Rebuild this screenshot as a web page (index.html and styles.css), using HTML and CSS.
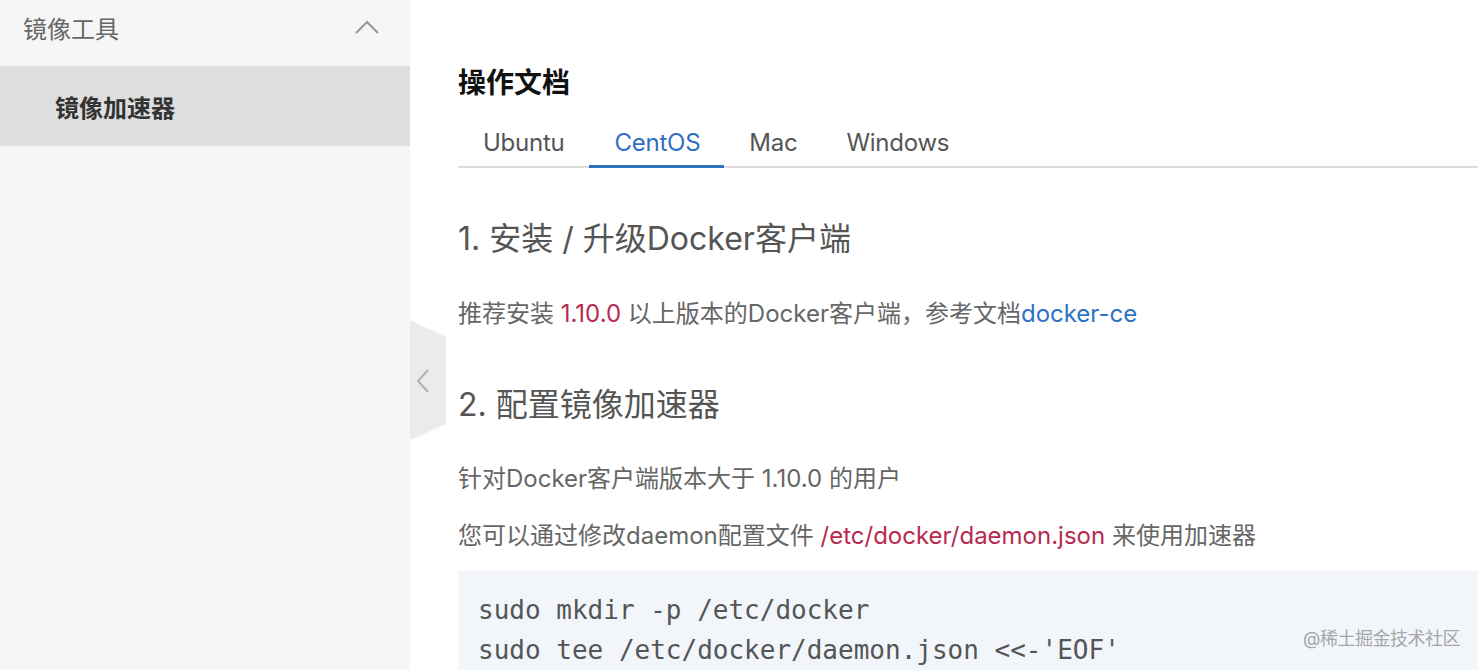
FILE: index.html
```html
<!DOCTYPE html>
<html lang="zh-CN">
<head>
<meta charset="utf-8">
<title>镜像加速器</title>
<link rel="stylesheet" href="styles.css">
</head>
<body>
<div class="page">
  <aside class="sidebar">
    <div class="side-header">
      <span>镜像工具</span>
      <svg class="chev-up" width="26" height="16" viewBox="0 0 26 16"><path d="M2 14 L13 3 L24 14" fill="none" stroke="#9a9a9a" stroke-width="2.2"/></svg>
    </div>
    <div class="side-item active">镜像加速器</div>
  </aside>
  <main class="main">
    <div class="collapse">
      <svg width="16" height="26" viewBox="0 0 16 26"><path d="M13 2 L3 13 L13 24" fill="none" stroke="#b0b0b0" stroke-width="2"/></svg>
    </div>
    <h1 class="title">操作文档</h1>
    <nav class="tabs">
      <span class="tab">Ubuntu</span>
      <span class="tab active">CentOS</span>
      <span class="tab">Mac</span>
      <span class="tab">Windows</span>
    </nav>
    <h2 class="sec sec1">1. 安装 / 升级Docker客户端</h2>
    <p class="para p1">推荐安装 <span class="red">1.10.0</span> 以上版本的Docker客户端，参考文档<a class="link">docker-ce</a></p>
    <h2 class="sec sec2">2. 配置镜像加速器</h2>
    <p class="para p2">针对Docker客户端版本大于 1.10.0 的用户</p>
    <p class="para p3">您可以通过修改daemon配置文件 <span class="red">/etc/docker/daemon.json</span> 来使用加速器</p>
    <pre class="code">sudo mkdir -p /etc/docker
sudo tee /etc/docker/daemon.json &lt;&lt;-'EOF'</pre>
  </main>
  <div class="watermark">@稀土掘金技术社区</div>
</div>
</body>
</html>
```
FILE: styles.css
```css
* { box-sizing: border-box; }
html, body { margin: 0; padding: 0; background: #fff; }
body {
  width: 1478px;
  height: 670px;
  overflow: hidden;
  font-family: Inter, "Noto Sans CJK SC", sans-serif;
}
.page {
  display: flex;
  height: 670px;
  position: relative;
}
.sidebar {
  width: 410px;
  flex: none;
  background: #f6f6f6;
}
.side-header {
  height: 66px;
  display: flex;
  align-items: center;
  justify-content: space-between;
  padding: 0 30px 12px 23px;
  font-size: 24px;
  color: #666;
}
.side-item {
  height: 80px;
  display: flex;
  align-items: center;
  padding-left: 55px;
  font-size: 24px;
}
.side-item.active {
  background: #dedede;
  color: #333;
  font-weight: 700;
}
.main {
  flex: 1;
  position: relative;
  padding-left: 48px;
  padding-top: 63px;
  min-width: 0;
}
.collapse {
  position: absolute;
  left: 0;
  top: 320px;
  width: 36px;
  height: 120px;
  background: #ebebeb;
  clip-path: polygon(0 0, 100% 17px, 100% 104px, 0 100%);
  display: flex;
  align-items: center;
  justify-content: center;
  padding-right: 10px;
  padding-top: 2px;
}
.title {
  margin: 0;
  font-size: 28px;
  line-height: 40px;
  font-weight: 700;
  color: #111;
}
.tabs {
  display: flex;
  margin-top: 18px;
  border-bottom: 2px solid #dcdcdc;
}
.tab {
  padding: 0 24px 0 25px;
  font-size: 24px;
  line-height: 44px;
  color: #555;
  letter-spacing: -0.25px;
  border-bottom: 3px solid transparent;
  margin-bottom: -2px;
}
.tab:first-child { padding-left: 25px; padding-right: 25px; }
.tab.active {
  color: #2f6fbf;
  border-bottom-color: #2f6fbf;
}
.sec {
  margin: 0;
  font-size: 32px;
  line-height: 44px;
  font-weight: 400;
  color: #555;
}
.sec1 { margin-top: 49px; }
.sec2 { margin-top: 51px; }
.para {
  margin: 0;
  font-size: 24px;
  line-height: 36px;
  color: #666;
}
.p1 { margin-top: 35px; }
.p2 { margin-top: 34px; }
.p3 { margin-top: 21px; }
.red { color: #b8294f; }
.link { color: #2d72c4; text-decoration: none; }
.code {
  margin: 17px 0 0 0;
  background: #f2f6fb;
  padding: 19px 20px 20px;
  font-family: "DejaVu Sans Mono", "Liberation Mono", monospace;
  font-size: 26px;
  line-height: 40px;
  color: #555;
}
.watermark {
  position: absolute;
  right: 18px;
  top: 626px;
  font-size: 18px;
  line-height: 26px;
  color: #a6a6a6;
  letter-spacing: -0.5px;
}
```
